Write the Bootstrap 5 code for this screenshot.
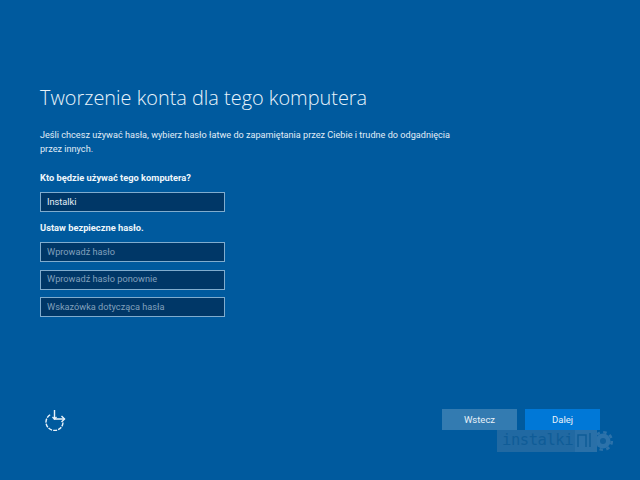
<!DOCTYPE html>
<html lang="pl">
<head>
<meta charset="utf-8">
<title>Tworzenie konta</title>
<link href="https://cdn.jsdelivr.net/npm/bootstrap@5.3.0/dist/css/bootstrap.min.css" rel="stylesheet">
<style>
html,body{height:100%}
body{background:#005a9e;color:#fff;font-family:Roboto,"Noto Sans","Liberation Sans",sans-serif;overflow:hidden}
.oobe-page{width:640px;height:480px;padding:84px 40px 50px 40px;position:relative}
.oobe-title{font-size:19.9px;font-weight:300;line-height:28px;margin:0 0 16px;color:#e8f3fb;font-family:"Open Sans",sans-serif}
.oobe-desc{font-size:9.15px;line-height:14px;width:420px;margin:0 0 15px;color:#e0edf7}
.oobe-label{font-size:9.3px;font-weight:700;line-height:14px;margin:0 0 7px;color:#eef6fb}
.oobe-input{display:block;width:185px;height:20px;border:1px solid #80acce;background:#003767;color:#e4eef6;font-size:9.2px;padding:0 6px 2px;border-radius:0;line-height:16px;box-shadow:none}
.oobe-input::placeholder{color:#80a0bc;opacity:1}
.oobe-input:focus{background:#003767;color:#e4eef6;border-color:#80acce;box-shadow:none}
.oobe-gap{margin-bottom:9px}
.oobe-stack{display:flex;flex-direction:column;gap:7.5px}
.oobe-foot{flex:1;align-items:flex-end}
.oobe-icon{margin-bottom:-1px}
.oobe-btn{width:75px;height:21px;padding:0;border:0;border-radius:0;font-size:9.5px;line-height:21px;color:#e8f2fa}
.oobe-back{background:#337bb1}
.oobe-next{background:#0078d7}
.oobe-back:hover,.oobe-next:hover{color:#e8f2fa}
.oobe-back:hover{background:#337bb1}.oobe-next:hover{background:#0078d7}
.oobe-mark{position:absolute;left:497px;top:430px;display:flex;align-items:center;height:22px;font-family:"DejaVu Sans Mono","Liberation Mono",monospace}
.oobe-mark-word{background:#2169a2;width:78px;height:22px;line-height:21px;font-size:15.5px;letter-spacing:-.45px;padding-left:5px;color:#0f5c97}
</style>
</head>
<body>
<main class="oobe-page d-flex flex-column">
  <h1 class="oobe-title">Tworzenie konta dla tego komputera</h1>
  <p class="oobe-desc">Jeśli chcesz używać hasła, wybierz hasło łatwe do zapamiętania przez Ciebie i trudne do odgadnięcia przez innych.</p>
  <p class="oobe-label">Kto będzie używać tego komputera?</p>
  <input class="form-control oobe-input oobe-gap" type="text" value="Instalki" aria-label="Nazwa">
  <p class="oobe-label">Ustaw bezpieczne hasło.</p>
  <div class="oobe-stack">
    <input class="form-control oobe-input" type="text" placeholder="Wprowadź hasło">
    <input class="form-control oobe-input" type="text" placeholder="Wprowadź hasło ponownie">
    <input class="form-control oobe-input" type="text" placeholder="Wskazówka dotycząca hasła">
  </div>
  <div class="d-flex oobe-foot justify-content-between">
    <svg width="22" height="24" viewBox="0 0 22 24" fill="none" stroke="#eaf3fa" stroke-width="1.4" class="oobe-icon ms-1" aria-hidden="true">
      <path d="M19 15.500A8.500 8.500 0 1 1 7 7.300" stroke-dasharray="4 1.100"/>
      <path d="M10.500 3v9h10"/>
      <path d="M8.500 10l2 2 2-2"/>
      <path d="M17.500 9l3 3-3 3"/>
    </svg>
    <div class="d-flex gap-2">
      <button class="btn oobe-btn oobe-back" type="button">Wstecz</button>
      <button class="btn oobe-btn oobe-next" type="button">Dalej</button>
    </div>
  </div>
  <div class="oobe-mark" aria-hidden="true">
    <span class="oobe-mark-word">instalki</span>
    <svg width="38" height="22" viewBox="0 0 38 22">
      <circle cx="28" cy="11" r="7.500" fill="#2c72aa"/>
      <circle cx="28" cy="11" r="8.800" fill="none" stroke="#2c72aa" stroke-width="2.600" stroke-dasharray="3.500 3.400"/>
      <circle cx="28" cy="11" r="3" fill="#105f9c"/>
      <path fill="#2a70a8" d="M0 0h22v22H0z"/>
      <path fill="none" stroke="#0f5c97" stroke-width="1.500" d="M3 17V5h8v12M15 3v14"/>
    </svg>
  </div>
</main>
<script src="https://cdn.jsdelivr.net/npm/bootstrap@5.3.0/dist/js/bootstrap.bundle.min.js"></script>
</body>
</html>
